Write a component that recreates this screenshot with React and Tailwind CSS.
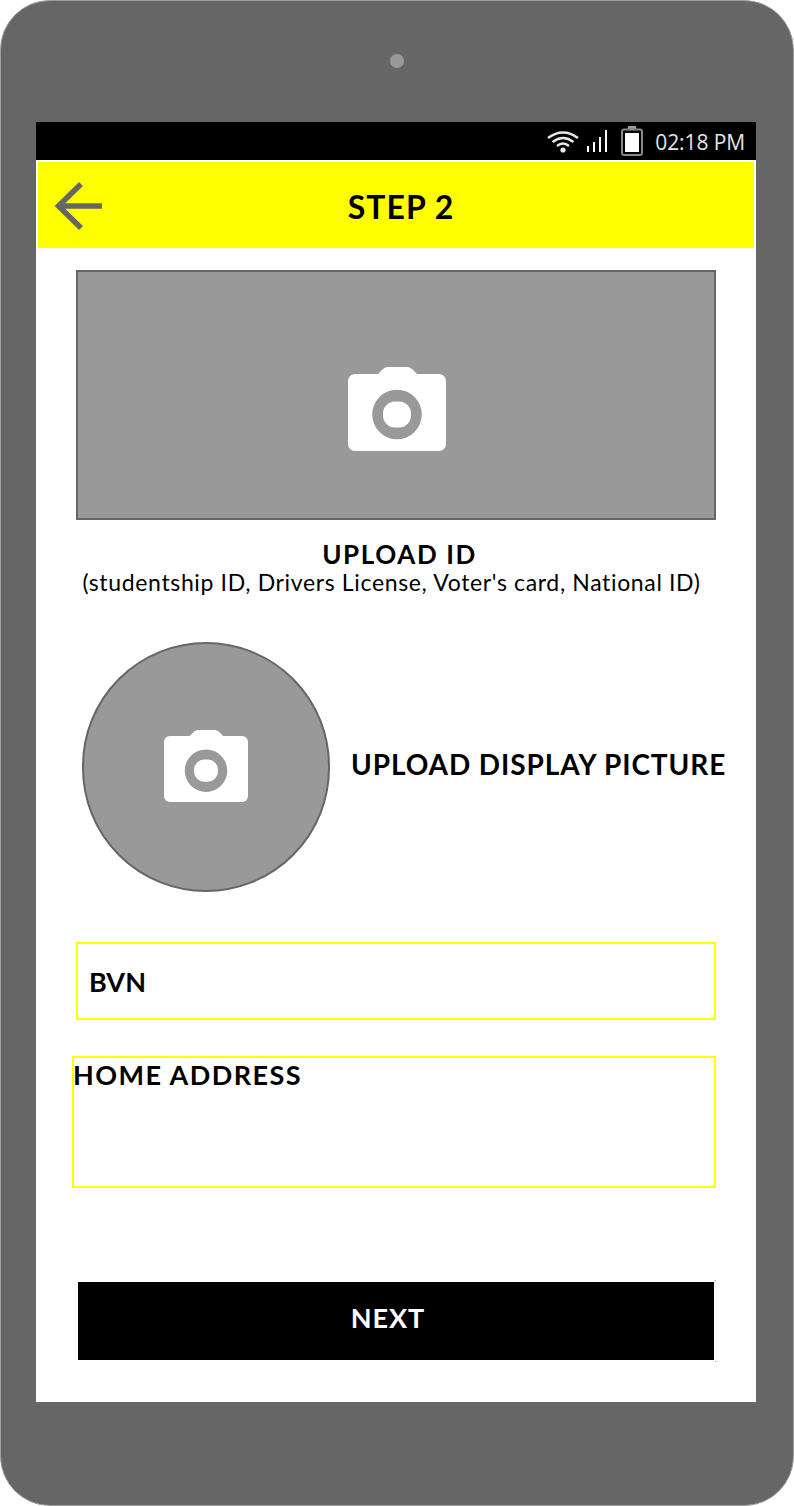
const hand = "font-['Lato','Noto_Sans',sans-serif] text-black";

function Camera({ className }) {
  return (
    <svg viewBox="0 0 98 84" className={className} aria-hidden="true">
      <path d="M29 8 L35 2 Q37 0 40 0 H59 Q62 0 64 2 L70 8 Z" fill="#fff" />
      <rect x="0" y="7" width="98" height="77" rx="7" fill="#fff" />
      <circle cx="49" cy="47.5" r="24.8" fill="#999" />
      <rect x="35" y="34.5" width="28" height="26" rx="12" fill="#fff" />
    </svg>
  );
}

function StatusBar() {
  return (
    <div className="flex h-[38px] items-center justify-end bg-black pr-[11px]">
      <svg viewBox="0 0 32 23" className="h-[23px] w-[32px]" fill="none" stroke="#e8e8e8" aria-hidden="true">
        <path d="M1 8 Q16 -3 31 8" strokeWidth="2.4" />
        <path d="M5.5 12 Q16 4 26.5 12" strokeWidth="2.4" />
        <path d="M10 16 Q16 11 22 16" strokeWidth="2.4" />
        <circle cx="16" cy="20" r="2.6" fill="#e8e8e8" stroke="none" />
      </svg>
      <svg viewBox="0 0 20 22" className="ml-[8px] h-[22px] w-[20px]" fill="#fff" aria-hidden="true">
        <rect x="0" y="16" width="2" height="6" />
        <rect x="6" y="12" width="2" height="10" />
        <rect x="12" y="7" width="2" height="15" />
        <rect x="18" y="0" width="2" height="22" />
      </svg>
      <svg viewBox="0 0 22 30" className="ml-[14px] h-[30px] w-[22px]" aria-hidden="true">
        <rect x="7" y="0" width="8" height="4" fill="#999" />
        <rect x="1" y="3.5" width="20" height="25.5" rx="2" fill="none" stroke="#888" strokeWidth="2" />
        <rect x="4" y="7" width="14" height="19" fill="#fff" />
      </svg>
      <span className="ml-[12px] mt-[2px] font-['Open_Sans',sans-serif] text-[21px] leading-[24px] tracking-[-0.1px] text-[#e4e4e4]">
        02:18 PM
      </span>
    </div>
  );
}

export default function App() {
  return (
    <div className="h-[1506px] w-[794px] bg-white">
      <div className="flex h-[1506px] w-[794px] flex-col items-center rounded-[50px] border border-[#a0a0a0] bg-[#666666]">
        <div className="mt-[53px] h-[14px] w-[14px] rounded-full bg-[#999999]" />
        <div className="mr-[2px] mt-[54px] flex h-[1280px] w-[720px] flex-col bg-white">
          <StatusBar />
          <div className="relative mx-[2px] mt-[2px] flex h-[86px] items-center justify-center bg-[#ffff00]">
            <svg viewBox="0 0 48 48" className="absolute left-[16px] top-[20px] h-[48px] w-[48px]" fill="none" stroke="#666" strokeWidth="5.5" aria-hidden="true">
              <path d="M48 24 H4" />
              <path d="M27 2 L4.5 24 L27 46" />
            </svg>
            <span className={`${hand} ml-[10px] pt-[4px] text-[32px] font-bold leading-[36px] tracking-[1px]`}>STEP 2</span>
          </div>

          <div className="flex flex-col px-[40px]">
            <div className="mt-[22px] flex h-[250px] w-[640px] items-center justify-center border-2 border-[#666666] bg-[#999999] pl-[2px] pt-[28px]">
              <Camera className="h-[84px] w-[98px]" />
            </div>

            <div className={`${hand} ml-[7px] mt-[19px] text-center text-[26px] font-bold leading-[30px] tracking-[1.6px]`}>UPLOAD ID</div>
            <div className={`${hand} -ml-[9px] whitespace-nowrap text-center text-[23px] leading-[26px] tracking-[0.65px]`}>
              (studentship ID, Drivers License, Voter's card, National ID)
            </div>

            <div className="mt-[47px] flex items-center">
              <div className="ml-[6px] flex h-[250px] w-[248px] shrink-0 items-center justify-center rounded-full border-2 border-[#666666] bg-[#999999] pb-[2px]">
                <Camera className="h-[72px] w-[84px]" />
              </div>
              <span className={`${hand} ml-[21px] whitespace-nowrap pb-[6px] text-[28px] font-bold leading-[34px] tracking-[0.9px]`}>
                UPLOAD DISPLAY PICTURE
              </span>
            </div>

            <div className="mt-[50px] flex h-[78px] w-[640px] items-center border-2 border-[#ffff00] pl-[11px] pt-[2px]">
              <span className={`${hand} text-[27px] font-bold leading-[32px]`}>BVN</span>
            </div>

            <div className="-ml-[4px] mt-[36px] h-[132px] w-[644px] border-2 border-[#ffff00] pt-[1px]">
              <span className={`${hand} -ml-[1px] block text-[27px] font-bold leading-[32px] tracking-[1.45px]`}>HOME ADDRESS</span>
            </div>

            <div className="relative ml-[2px] mt-[94px] flex h-[78px] w-[636px] items-center justify-center bg-black pb-[6px] pr-[16px]">
              <span className="font-['Lato','Noto_Sans',sans-serif] text-[27px] font-bold leading-[32px] tracking-[1px] text-white">NEXT</span>
              <div className="absolute -right-[2px] -top-[2px] h-px w-px bg-[#999999]" />
              <div className="absolute -bottom-[2px] -right-[2px] h-px w-px bg-[#999999]" />
            </div>
          </div>
        </div>
      </div>
    </div>
  );
}
